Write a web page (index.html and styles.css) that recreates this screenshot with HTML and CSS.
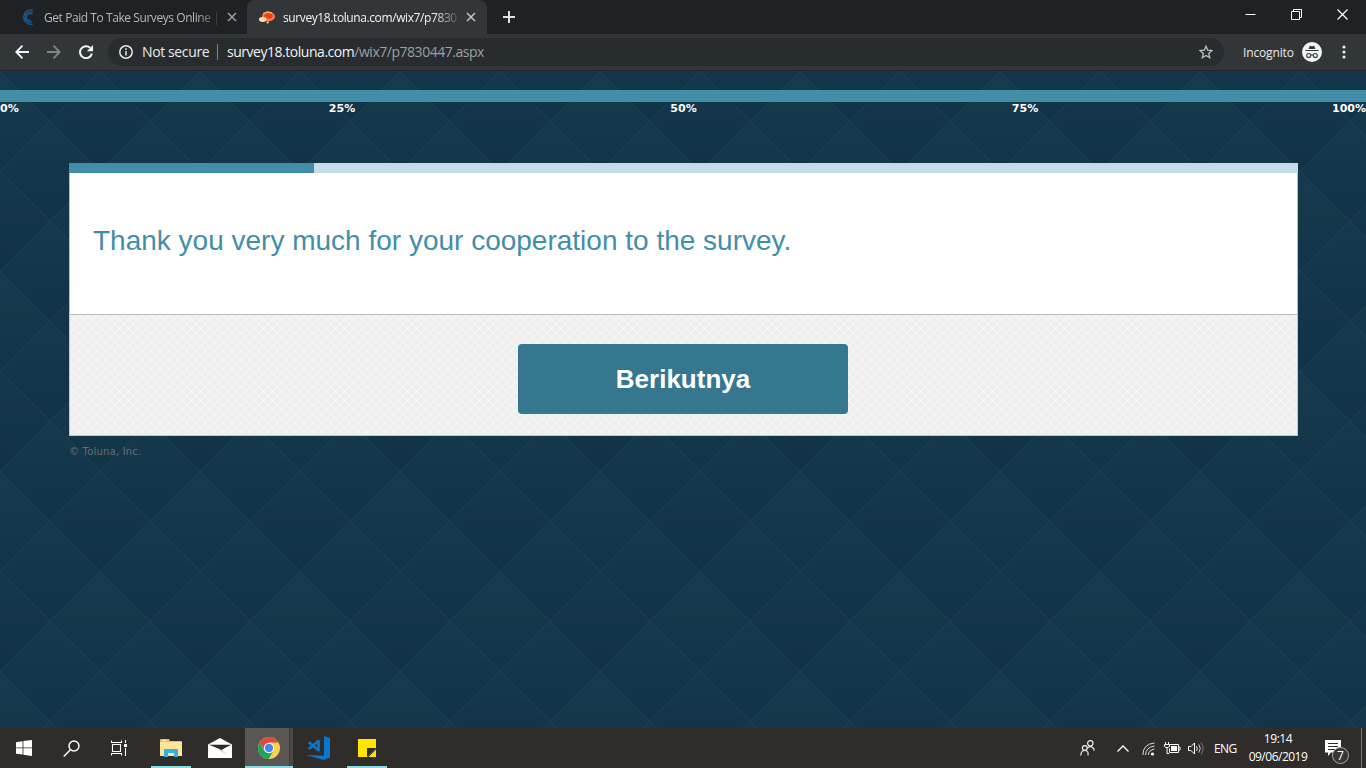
FILE: index.html
```html
<!DOCTYPE html>
<html lang="en">
<head>
<meta charset="utf-8">
<title>survey18.toluna.com/wix7/p7830447.aspx</title>
<link rel="stylesheet" href="styles.css">
</head>
<body>
<div class="screen">
  <header class="tabstrip">
    <div class="tab">
      <svg class="favicon" width="16" height="16" viewBox="0 0 16 16" fill="none" stroke="#1d5f99" stroke-width="1.2"><path d="M13 1.2A7.2 7.2 0 1 0 13 15"/><path d="M12.5 3.2A5.300 5.300 0 1 0 12 13.200" stroke="#1a5586"/><path d="M12.300 5.200A3.600 3.600 0 1 0 11 11.500" stroke="#1d5f99"/></svg>
      <span class="tab-title title-first">Get Paid To Take Surveys Online |</span>
      <svg class="tab-close" width="10" height="10" viewBox="0 0 10 10" stroke="#9aa0a6" stroke-width="1.5"><path d="M1 1l8 8M9 1l-8 8"/></svg>
    </div>
    <div class="tab active">
      <svg class="favicon" width="18" height="16" viewBox="0 0 18 16"><ellipse cx="10.500" cy="7.500" rx="6.500" ry="4.700" fill="#f58245"/><ellipse cx="10.500" cy="7" rx="4.300" ry="2.800" fill="#ee3d18"/><path d="M5 4.500Q9 1.500 14 3.800" stroke="#ffc27a" fill="none"/><ellipse cx="4.800" cy="10.500" rx="3.800" ry="2.400" fill="#ffdca8"/><path d="M8 13l3-1-1 3z" fill="#f5d7a0"/></svg>
      <span class="tab-title title-active">survey18.toluna.com/wix7/p7830</span>
      <svg class="tab-close" width="10" height="10" viewBox="0 0 10 10" stroke="#c4c7ca" stroke-width="1.5"><path d="M1 1l8 8M9 1l-8 8"/></svg>
    </div>
    <svg class="new-tab" width="12" height="12" viewBox="0 0 12 12" stroke="#dee1e6" stroke-width="2"><path d="M6 0v12M0 6h12"/></svg>
    <div class="window-controls">
      <svg width="11" height="11" viewBox="0 0 11 11" stroke="#fff" fill="none"><path d="M.5 5.5h10"/></svg>
      <svg width="11" height="11" viewBox="0 0 11 11" stroke="#fff" fill="none"><path d="M.5 2.5h8v8h-8zM2.5 2V.5h8v8H9"/></svg>
      <svg width="11" height="11" viewBox="0 0 11 11" stroke="#fff" stroke-width="1.2" fill="none"><path d="M.5.5l10 10M10.5.5l-10 10"/></svg>
    </div>
  </header>
  <div class="toolbar">
    <svg class="nav back" width="14" height="14" viewBox="0 0 14 14" stroke="#f1f3f4" stroke-width="1.9" fill="none"><path d="M14 7H1.5M7.5.7L1.3 7l6.2 6.3"/></svg>
    <svg class="nav forward" width="14" height="14" viewBox="0 0 14 14" stroke="#808386" stroke-width="1.9" fill="none"><path d="M0 7h12.5M6.5.7L12.7 7l-6.2 6.3"/></svg>
    <svg class="nav reload" width="14" height="14" viewBox="0 0 14 14" stroke="#f1f3f4" stroke-width="2" fill="none"><path d="M12.9 8.5A6 6 0 1 1 11.2 2.8"/><path d="M14 0v6.2H7.8z" fill="#f1f3f4" stroke="none"/></svg>
    <div class="address">
      <svg width="14" height="14" viewBox="0 0 14 14" fill="none" stroke="#e8eaed" stroke-width="1.5"><circle cx="7" cy="7" r="6.2"/><path d="M7 6v4.4M7 3.3v1.6"/></svg>
      <span class="not-secure">Not secure</span>
      <span class="divider"></span>
      <span class="url"><span class="host">survey18.toluna.com</span>/wix7/p7830447.aspx</span>
      <svg class="star" width="14" height="14" viewBox="0 0 14 14" fill="none" stroke="#bdc1c6" stroke-width="1.3"><path d="M7 1.2l1.7 4 4.3.4-3.3 2.9 1 4.2L7 10.5l-3.7 2.2 1-4.2L1 5.6l4.3-.4z"/></svg>
    </div>
    <span class="incognito">Incognito</span>
    <svg class="spy" width="20" height="20" viewBox="0 0 20 20"><circle cx="10" cy="10" r="10" fill="#f1f3f4"/><path d="M6.7 7l1-3.2 2.3.5 2.3-.5 1 3.2zM3.5 8h13v1h-13z" fill="#35383c"/><g fill="none" stroke="#35383c" stroke-width="1.1"><circle cx="6.7" cy="13.5" r="2"/><circle cx="13.3" cy="13.5" r="2"/><path d="M8.7 13.2q1.3-.8 2.6 0"/></g></svg>
    <svg class="kebab" width="4" height="14" viewBox="0 0 4 14" fill="#e8eaed"><circle cx="2" cy="2" r="1.6"/><circle cx="2" cy="7" r="1.6"/><circle cx="2" cy="12" r="1.6"/></svg>
  </div>
  <main class="page">
    <div class="progress"></div>
    <div class="scale"><span>0%</span><span>25%</span><span>50%</span><span>75%</span><span>100%</span></div>
    <section class="card">
      <div class="card-progress"><div class="card-progress-value"></div></div>
      <div class="question"><h1>Thank you very much for your cooperation to the survey.</h1></div>
      <div class="actions"><button class="next">Berikutnya</button></div>
    </section>
    <div class="copyright">© Toluna, Inc.</div>
  </main>
  <footer class="taskbar">
    <div class="task start"><svg width="16" height="16" viewBox="0 0 16 16" fill="#fff"><path d="M0 2.2L6.6 1.3V7.5H0zM7.4 1.1L16 0v7.5H7.4zM0 8.3h6.6v6.2L0 13.7zM7.4 8.3H16V16l-8.6-1.2z"/></svg></div>
    <div class="task search"><svg width="17" height="17" viewBox="0 0 17 17" fill="none" stroke="#fff" stroke-width="1.4"><circle cx="11" cy="6" r="5"/><path d="M7.4 9.7L.7 16.4"/></svg></div>
    <div class="task"><svg width="16" height="16" viewBox="0 0 16 16" fill="none" stroke="#fff" stroke-width="1.1"><path d="M.5.5v2h10v-2M1.5 4.5h8v7h-8zM.5 15.5v-2h10v2M14.5 0v3M14.5 8v8"/><path d="M13 4h3v3h-3z" fill="#fff" stroke="none"/></svg></div>
    <div class="task running"><svg width="22" height="18" viewBox="0 0 22 18"><path d="M0 1q0-1 1-1h8l1 2h11q1 0 1 1v14H0z" fill="#f0c04a"/><path d="M0 3h22v14H0z" fill="#ffe596"/><path d="M2 1h4v1H2z" fill="#fff4cf"/><path d="M4 18v-7q0-1 1-1h12q1 0 1 1v7h-4v-4H8v4z" fill="#38aee4"/></svg></div>
    <div class="task"><svg width="24" height="20" viewBox="0 0 24 20"><path d="M0 6.5L12 0l12 6.5V20H0z" fill="#fff"/><path d="M1 6.7h22l-9.7 5.2 6.2 5.6L11.5 11z" fill="#302b29"/></svg></div>
    <div class="task selected"><svg width="22" height="22" viewBox="0 0 22 22"><circle cx="11" cy="11" r="11" fill="#ffd04b"/><path d="M1.5 5.5A11 11 0 0 1 20.5 5.5H11L7 14z" fill="#dc4b3e"/><path d="M1.5 5.5L6.2 13.7 15.5 13.7 10.5 22A11 11 0 0 1 1.5 5.5z" fill="#1ca261"/><circle cx="11" cy="11" r="5.2" fill="#fff"/><circle cx="11" cy="11" r="4.2" fill="#4587f3"/></svg></div>
    <div class="task code"><svg width="24" height="24" viewBox="0 0 24 24"><path d="M18 0l6 2v19.500L18 24 0 19l18 .8z" fill="#0878cf"/><path d="M2.800 6.200l9.700 8V5L2.800 13" fill="none" stroke="#0878cf" stroke-width="2.600" stroke-linejoin="round"/></svg></div>
    <div class="task running note"><svg width="18" height="18" viewBox="0 0 18 18"><path d="M0 0h18v9L9 18H0z" fill="#ffe500"/><path d="M9 18V9h9z" fill="#302c29"/><path d="M10.5 18L18 10.5V18z" fill="#ffe500"/></svg></div>
    <div class="tray">
      <svg class="people" width="15" height="16" viewBox="0 0 15 16" fill="none" stroke="#eee" stroke-width="1.2"><circle cx="10.3" cy="3.3" r="2.7"/><path d="M7.5 8.2q3-3.4 6.5.8v1.8"/><circle cx="4.8" cy="8" r="2.4"/><path d="M.8 15.5q0-5 4-5t3.2 5"/></svg>
      <svg class="chevron" width="12" height="7" viewBox="0 0 12 7" fill="none" stroke="#fff" stroke-width="1.3"><path d="M.5 6.5L6 1l5.500 5.500"/></svg>
      <svg class="wifi" width="13" height="14" viewBox="0 0 13 14" fill="none" stroke="#ddd"><path d="M.8 13Q1 2 12.500 1M3.500 13Q4 5 12.500 4M6.300 13Q6.700 8 12.500 7"/><circle cx="10.500" cy="12" r="1.600" fill="#fff" stroke="none"/></svg>
      <svg class="battery" width="17" height="12" viewBox="0 0 17 12" fill="none" stroke="#fff"><path d="M6 2.500h8.500v8h-9v-4M14.500 5h1.500v3h-1.500"/><path d="M7 4h6v5H7z" fill="#fff" stroke="none"/><path d="M1.500 0v2M4.500 0v2M.5 2.500h5v2l-1.500 1H2l-1.500-1zM3 6v5.500h2"/></svg>
      <svg class="volume" width="16" height="13" viewBox="0 0 16 13" fill="none" stroke="#fff"><path d="M.5 4.500h2.500l3.500-3.500v11L3 8.500H.5zM8.500 4.300q1.600 2.200 0 4.400"/><path d="M10.800 2.500q3 4 0 8" stroke="#ccc"/><path d="M13 .7q4.300 5.800 0 11.600" stroke="#777"/></svg>
      <span class="lang">ENG</span>
      <div class="clock"><span>19:14</span><span class="date">09/06/2019</span></div>
      <div class="notify"><svg width="16" height="16" viewBox="0 0 16 16"><path d="M0 0h16v12.500H6L3 16v-3.500H0z" fill="#fff"/><path d="M3 3.500h10M3 6.500h10M3 9.500h7" stroke="#302c29" stroke-width="1.200"/></svg><span class="count">7</span></div>
    </div>
  </footer>
</div>
</body>
</html>
```
FILE: styles.css
```css
* { box-sizing: border-box; }
body { margin: 0; background: #123448; font-family: "Open Sans", "Noto Sans", sans-serif; }
svg { display: block; flex: none; }
.screen { width: 1366px; height: 768px; display: flex; flex-direction: column; overflow: hidden; }
.tabstrip { height: 34px; flex: none; background: #202124; display: flex; }
.tab { width: 247px; height: 34px; display: flex; align-items: center; padding-left: 20px; font-size: 12px; color: #b4b8bc; }
.tab.active { width: 240px; padding-left: 11px; background: #323639; border-radius: 8px 8px 0 0; color: #f1f3f4; }
.tab-title { width: 175px; margin-left: 8px; overflow: hidden; white-space: nowrap; -webkit-mask-image: linear-gradient(90deg, #000 152px, rgba(0,0,0,.1) 176px); }
.active .tab-title { margin-left: 7px; }
.title-first { letter-spacing: -0.43px; }
.title-active { letter-spacing: -0.4px; }
.tab-close { margin-left: 8px; }
.new-tab { margin: 11px 0 0 16px; }
.window-controls { margin: 9px 18px 0 auto; display: flex; gap: 35px; }
.toolbar { height: 37px; flex: none; background: #323639; border-bottom: 1px solid #242629; display: flex; align-items: center; color: #e8eaed; }
.back { margin-left: 15px; }
.forward { margin-left: 18px; }
.reload { margin-left: 18px; }
.address { width: 1116px; height: 28px; margin-left: 15px; padding: 0 11px; border-radius: 14px; background: #282c2f; display: flex; align-items: center; font-size: 14px; line-height: 18px; white-space: nowrap; }
.not-secure { margin: -1px 0 0 9px; width: 67px; letter-spacing: -0.38px; }
.divider { width: 1px; height: 16px; margin: 0 9px 0 8px; background: #81868a; }
.url { margin-top: -1px; color: #9aa0a6; letter-spacing: -0.47px; }
.host { color: #f1f3f4; }
.star { margin-left: auto; }
.incognito { width: 51px; margin-left: 19px; font-size: 12px; letter-spacing: -0.15px; }
.spy { margin-left: 8px; }
.kebab { margin-left: 20px; }
.page { flex: 1; padding-top: 19px; background: url("data:image/svg+xml,%3Csvg xmlns='http://www.w3.org/2000/svg' width='200' height='200'%3E%3Cdefs%3E%3ClinearGradient id='g' x1='0' y1='0' x2='0' y2='1'%3E%3Cstop stop-color='%23183b4e'/%3E%3Cstop offset='1' stop-color='%230f3045'/%3E%3C/linearGradient%3E%3ClinearGradient id='h' x1='0' y1='0' x2='0' y2='1'%3E%3Cstop stop-color='%23214357' stop-opacity='.16'/%3E%3Cstop offset='1' stop-color='%23092b40' stop-opacity='.15'/%3E%3C/linearGradient%3E%3Cpath id='d' d='M0 0L100 100L0 200L-100 100z'/%3E%3C/defs%3E%3Cg fill='url(%23g)'%3E%3Cuse href='%23d'/%3E%3Cuse href='%23d' x='200'/%3E%3Cuse href='%23d' x='100' y='100'/%3E%3Cuse href='%23d' x='100' y='-100'/%3E%3C/g%3E%3Cg fill='url(%23h)'%3E%3Cuse href='%23d' x='100'/%3E%3Cuse href='%23d' y='100'/%3E%3Cuse href='%23d' x='200' y='100'/%3E%3Cuse href='%23d' y='-100'/%3E%3Cuse href='%23d' x='200' y='-100'/%3E%3C/g%3E%3Cpath d='M0 0L200 200M200 0L0 200M100 0L0 100L100 200L200 100z' fill='none' stroke='%2330586a' stroke-opacity='.4' stroke-width='.8'/%3E%3C/svg%3E"); }
.progress { height: 12px; background: #428ea9; }
.scale { height: 61px; display: grid; grid-template-columns: 1fr 2fr 2fr 2fr 1fr; color: #fff; font: bold 11px/13px "DejaVu Sans", sans-serif; text-align: center; }
.scale span { padding-left: 1px; }
.scale span:first-child { text-align: left; padding-left: 0; }
.scale span:last-child { text-align: right; }
.card { width: 1229px; margin-left: 69px; }
.card-progress { height: 10px; background: #c5dde5; }
.card-progress-value { width: 245px; height: 10px; background: #428ea9; }
.question { height: 142px; padding: 49px 23px 0; background: #fff; border: 1px solid #bbb; border-top: 0; }
h1 { margin: 0; font: 28px/38px "Liberation Sans", Arial, sans-serif; color: #428ea9; white-space: nowrap; }
.actions { height: 121px; display: flex; justify-content: center; padding: 29px 1px 0 0; border: 1px solid #bfc8cb; border-top: 0; background: #efefef url("data:image/svg+xml,%3Csvg xmlns='http://www.w3.org/2000/svg' width='9' height='9'%3E%3Cpath d='M0 0L9 9M9 0L0 9' stroke='%23f9f9f9' stroke-width='.9'/%3E%3C/svg%3E"); }
.next { width: 330px; height: 70px; padding: 0; border: 0; border-radius: 4px; background: #35778e; color: #fff; font: bold 26px/70px "Liberation Sans", Arial, sans-serif; }
.copyright { margin: 9px 0 0 69px; color: #6c6c6e; font: 10px/14px "DejaVu Sans", sans-serif; letter-spacing: .2px; }
.taskbar { height: 40px; flex: none; background: #302c29; display: flex; color: #fff; }
.task { width: 48px; height: 40px; display: flex; align-items: center; justify-content: center; }
.search { width: 47px; }
.task:nth-child(3) { width: 48px; }
.running { width: 40px; margin: 0 5px 0 8px; border-bottom: 2px solid #83dde3; }
.running svg, .selected svg { margin-top: 2px; }
.selected { width: 48px; margin-left: 1px; background: linear-gradient(90deg, #5a5653 44px, #403c39 44px, #403c39 45px, #4b4744 45px); border-bottom: 2px solid #83dde3; }
.code { width: 49px; }
.note { margin-left: 5px; }
.tray { margin: 0 4px 0 auto; display: flex; align-items: center; font-size: 12px; }
.chevron { margin-left: 22px; }
.wifi { margin: 2px 0 0 13px; }
.battery { margin-left: 9px; }
.volume { margin-left: 7px; }
.lang { width: 24px; margin-left: 10px; letter-spacing: -.55px; }
.clock { width: 60px; margin-left: 10px; display: flex; flex-direction: column; align-items: center; line-height: 18px; letter-spacing: -.45px; }
.date { letter-spacing: -.5px; }
.notify { width: 37px; height: 40px; margin-left: 17px; padding-top: 12px; border-right: 1px solid #777; position: relative; }
.count { position: absolute; left: 7px; top: 19px; width: 17px; height: 17px; border: 1px solid #aaa; border-radius: 50%; background: #393633; font-size: 12px; line-height: 15px; text-align: center; }
```
